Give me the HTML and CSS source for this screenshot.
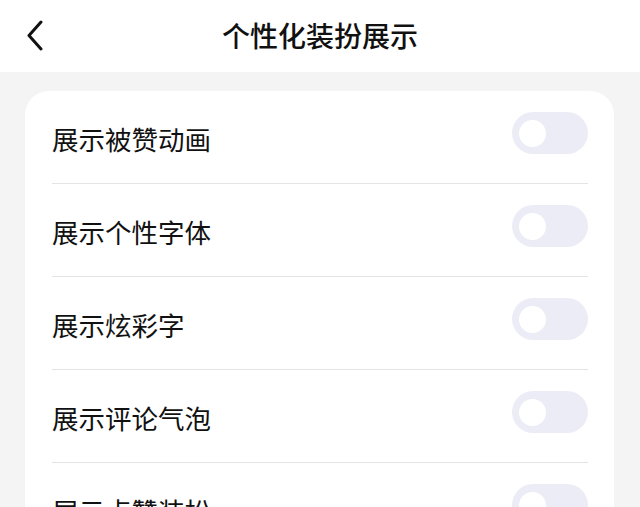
FILE: index.html
```html
<!DOCTYPE html>
<html lang="zh-CN">
<head>
<meta charset="utf-8">
<link rel="stylesheet" href="styles.css">
</head>
<body>
<header class="topbar">
  <span class="back">
    <svg width="20" height="32" viewBox="0 0 20 32"><path d="M16 2 L4 15.5 L16 29" fill="none" stroke="#111" stroke-width="3" stroke-linecap="round" stroke-linejoin="round"/></svg>
  </span>
  <h1 class="title">个性化装扮展示</h1>
</header>
<main class="content">
  <section class="card">
    <div class="row"><span class="label">展示被赞动画</span><span class="toggle"><span class="knob"></span></span></div>
    <div class="row"><span class="label">展示个性字体</span><span class="toggle"><span class="knob"></span></span></div>
    <div class="row"><span class="label">展示炫彩字</span><span class="toggle"><span class="knob"></span></span></div>
    <div class="row"><span class="label">展示评论气泡</span><span class="toggle"><span class="knob"></span></span></div>
    <div class="row"><span class="label">展示点赞装扮</span><span class="toggle"><span class="knob"></span></span></div>
  </section>
</main>
</body>
</html>
```
FILE: styles.css
```css
html, body {
  margin: 0;
  padding: 0;
  height: 100%;
  overflow: hidden;
}
body {
  background: #f4f4f4;
  font-family: "Noto Sans CJK SC", "Noto Sans", sans-serif;
  color: #111;
}
.topbar {
  height: 72px;
  background: #fff;
  display: flex;
  align-items: center;
  justify-content: center;
  position: relative;
}
.back {
  position: absolute;
  left: 25px;
  top: 20px;
  width: 20px;
  height: 32px;
}
.back svg { display: block; }
.title {
  margin: 0;
  font-size: 28px;
  font-weight: 500;
  line-height: 1;
  margin-top: -2px;
}
.content {
  padding: 19px 26px 0 25px;
}
.card {
  background: #fff;
  border-radius: 24px;
  padding: 0 26px 0 27px;
}
.row {
  height: 92px;
  display: flex;
  align-items: center;
  justify-content: space-between;
  border-bottom: 1.5px solid #e4e4e4;
}
.label {
  font-size: 26.5px;
  line-height: 1;
  margin-top: 5px;
}
.toggle {
  width: 76px;
  height: 42px;
  border-radius: 21px;
  background: #ececf6;
  display: flex;
  align-items: center;
  padding-left: 7px;
  box-sizing: border-box;
  margin-bottom: 8px;
}
.knob {
  width: 27px;
  height: 27px;
  border-radius: 50%;
  background: #fff;
}
```
